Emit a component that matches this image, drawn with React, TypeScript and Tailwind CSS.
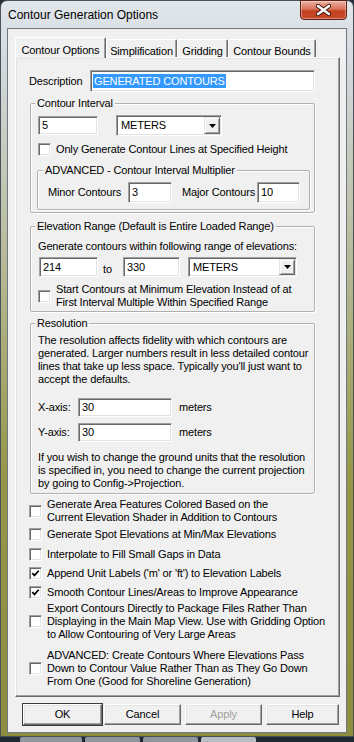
import React from 'react';

// classic (Win9x style) controls inside an Aero window frame
const SUNKEN =
  'border border-t-[#a0a0a0] border-l-[#a0a0a0] border-r-white border-b-white bg-white shadow-[inset_1px_1px_0_#696969,inset_-1px_-1px_0_#e3e3e3]';

function Edit({ value, className }: { value: string; className: string }) {
  return (
    <div className={`${SUNKEN} flex items-center pl-[3px] shrink-0 ${className}`}>
      <span className="whitespace-nowrap">{value}</span>
    </div>
  );
}

function Combo({ value, className }: { value: string; className: string }) {
  return (
    <div className={`${SUNKEN} flex items-stretch p-[1px] shrink-0 ${className}`}>
      <span className="flex-1 flex items-center pl-[3px] whitespace-nowrap">{value}</span>
      <span className="w-[16px] flex items-center justify-center bg-[#f0f0f0] border border-t-[#e3e3e3] border-l-[#e3e3e3] border-r-[#696969] border-b-[#696969] shadow-[inset_1px_1px_0_#fff,inset_-1px_-1px_0_#a0a0a0]">
        <svg width="7" height="4" viewBox="0 0 7 4">
          <path d="M0 0h7L3.5 4z" fill="#000" />
        </svg>
      </span>
    </div>
  );
}

function Check({ checked }: { checked?: boolean }) {
  return (
    <span className={`${SUNKEN} w-[13px] h-[13px] shrink-0 flex items-center justify-center`}>
      {checked && (
        <svg width="9" height="9" viewBox="0 0 9 9">
          <path d="M1.3 4.2l2.2 2.2 4.2-4.6" stroke="#000" strokeWidth="1.7" fill="none" />
        </svg>
      )}
    </span>
  );
}

function CheckRow({ checked, lines, className = '' }: { checked?: boolean; lines: string[]; className?: string }) {
  return (
    <div className={`flex items-center gap-[5px] ${className}`}>
      <Check checked={checked} />
      <div className="leading-[13px] whitespace-nowrap">
        {lines.map((l) => (
          <div key={l}>{l}</div>
        ))}
      </div>
    </div>
  );
}

function Btn({ label, className = '', disabled }: { label: string; className?: string; disabled?: boolean }) {
  return (
    <div
      className={`h-[21px] flex items-center justify-center bg-[#f0f0f0] border border-t-white border-l-white border-r-[#696969] border-b-[#696969] shadow-[inset_-1px_-1px_0_#a0a0a0,inset_1px_1px_0_#e3e3e3] ${
        disabled ? 'text-[#a0a0a0]' : 'text-black'
      } ${className}`}
    >
      {label}
    </div>
  );
}

const tabs = [
  { label: 'Simplification', w: 'w-[71px]' },
  { label: 'Gridding', w: 'w-[51px]' },
  { label: 'Contour Bounds', w: 'w-[88px]' },
];

export default function App() {
  return (
    <div className="w-[354px] h-[742px] overflow-hidden bg-[#25303b] font-['Liberation_Sans',Arial,sans-serif] text-[11px] tracking-[-0.15px] text-black">
      <div className="h-[737px] flex flex-col rounded-t-[7px] border border-[#4b5157] bg-[linear-gradient(180deg,#e1e6eb_0px,#d3d9de_60px,#bcc0a6_220px,#959646_480px,#8c8d3f_737px)]">
        {/* title bar */}
        <div className="h-[27px] shrink-0 flex items-start justify-between">
          <span className="pl-[7px] pt-[6px] text-[12px] tracking-normal leading-[16px] whitespace-nowrap">
            Contour Generation Options
          </span>
          <div className="relative w-[47px] h-[20px] -mt-[1px] mr-[6px] rounded-b-[4px] border border-[#5e2015] bg-[linear-gradient(180deg,#eab2a2_0%,#d8735b_45%,#c4401f_55%,#c84a2a_100%)] shadow-[inset_0_0_0_1px_rgba(255,255,255,0.35)]">
            <svg width="47" height="20" viewBox="0 0 47 20" className="absolute -left-[1px] -top-[1px]">
              <path d="M18 6l11 8M29 6l-11 8" stroke="#43170e" strokeWidth="4.4" strokeLinecap="round" />
              <path d="M18 6l11 8M29 6l-11 8" stroke="#fff" strokeWidth="2.4" strokeLinecap="round" />
            </svg>
          </div>
        </div>

        {/* client area */}
        <div className="mx-[6px] h-[705px] shrink-0 border border-[#6f7781] bg-[#f0f0f0] pt-[8px] pl-[7px]">
          {/* tab strip */}
          <div className="flex items-end h-[20px]">
            <div className="relative z-10 w-[91px] h-[21px] -mb-[1px] flex items-start justify-center pt-[4px] bg-[#f0f0f0] rounded-t-[2px] border border-b-0 border-t-white border-l-white border-r-[#696969] shadow-[inset_-1px_0_0_#a0a0a0]">
              Contour Options
            </div>
            {tabs.map((t) => (
              <div
                key={t.label}
                className={`${t.w} h-[18px] flex items-start justify-center pt-[3px] bg-[#f0f0f0] rounded-t-[2px] border border-b-0 border-t-white border-l-white border-r-[#696969] shadow-[inset_-1px_0_0_#a0a0a0] whitespace-nowrap`}
              >
                {t.label}
              </div>
            ))}
          </div>

          {/* tab page */}
          <div className="w-[325px] h-[640px] border border-t-white border-l-white border-r-[#696969] border-b-[#696969] shadow-[inset_-1px_-1px_0_#a0a0a0,inset_1px_1px_0_#e3e3e3] pl-[13px] flex flex-col">
            <div className="mt-[12px] flex items-center h-[22px]">
              <span className="w-[61px]">Description</span>
              <div className={`${SUNKEN} w-[225px] h-[22px] flex items-center pl-[2px]`}>
                <span className="bg-[#3399ff] text-white leading-[14px] px-[1px] whitespace-nowrap">GENERATED CONTOURS</span>
              </div>
            </div>

            {/* Contour Interval */}
            <fieldset className="ml-[1px] mt-[5px] w-[285px] border border-[#b0b0b0] rounded-[2px] shadow-[inset_1px_1px_0_#fff,1px_1px_0_#fff]">
              <legend className="ml-[4px] px-[2px] leading-[13px] bg-[#f0f0f0]">Contour Interval</legend>
              <div className="pl-[7px] pt-[5px] pb-[2px]">
                <div className="flex items-center h-[21px]">
                  <Edit value="5" className="w-[60px] h-[19px]" />
                  <Combo value="METERS" className="ml-[18px] w-[106px] h-[21px]" />
                </div>
                <CheckRow className="mt-[7px]" lines={['Only Generate Contour Lines at Specified Height']} />

                <fieldset className="-ml-[1px] mt-[8px] w-[273px] border border-[#b0b0b0] rounded-[2px] shadow-[inset_1px_1px_0_#fff,1px_1px_0_#fff]">
                  <legend className="ml-[5px] px-[2px] leading-[13px] bg-[#f0f0f0]">ADVANCED - Contour Interval Multiplier</legend>
                  <div className="pl-[10px] pt-[5px] pb-[6px] flex items-center h-[21px] box-content">
                    <span className="w-[80px] whitespace-nowrap">Minor Contours</span>
                    <Edit value="3" className="w-[44px] h-[21px]" />
                    <span className="ml-[10px] w-[75px] whitespace-nowrap">Major Contours</span>
                    <Edit value="10" className="w-[43px] h-[21px]" />
                  </div>
                </fieldset>
              </div>
            </fieldset>

            {/* Elevation Range */}
            <fieldset className="ml-[1px] mt-[7px] w-[285px] border border-[#b0b0b0] rounded-[2px] shadow-[inset_1px_1px_0_#fff,1px_1px_0_#fff]">
              <legend className="ml-[4px] px-[2px] leading-[13px] bg-[#f0f0f0]">Elevation Range (Default is Entire Loaded Range)</legend>
              <div className="pl-[7px] pt-[7px] pb-[2px]">
                <div className="leading-[13px] whitespace-nowrap">Generate contours within following range of elevations:</div>
                <div className="mt-[4px] flex items-center h-[20px]">
                  <Edit value="214" className="ml-[1px] w-[59px] h-[20px]" />
                  <span className="ml-[5px] w-[20px] pt-[4px]">to</span>
                  <Edit value="330" className="w-[57px] h-[20px]" />
                  <Combo value="METERS" className="ml-[8px] w-[109px] h-[20px]" />
                </div>
                <CheckRow
                  className="mt-[6px]"
                  lines={['Start Contours at Minimum Elevation Instead of at', 'First Interval Multiple Within Specified Range']}
                />
              </div>
            </fieldset>

            {/* Resolution */}
            <fieldset className="ml-[1px] mt-[5px] w-[285px] border border-[#b0b0b0] rounded-[2px] shadow-[inset_1px_1px_0_#fff,1px_1px_0_#fff]">
              <legend className="ml-[4px] px-[2px] leading-[13px] bg-[#f0f0f0]">Resolution</legend>
              <div className="pl-[7px] pt-[4px] pb-[3px]">
                <div className="leading-[13px] whitespace-nowrap">
                  <div>The resolution affects fidelity with which contours are</div>
                  <div>generated. Larger numbers result in less detailed contour</div>
                  <div>lines that take up less space. Typically you'll just want to</div>
                  <div>accept the defaults.</div>
                </div>
                <div className="mt-[12px] flex items-center h-[19px]">
                  <span className="w-[40px]">X-axis:</span>
                  <Edit value="30" className="w-[94px] h-[19px]" />
                  <span className="ml-[7px]">meters</span>
                </div>
                <div className="mt-[6px] flex items-center h-[19px]">
                  <span className="w-[40px]">Y-axis:</span>
                  <Edit value="30" className="w-[94px] h-[19px]" />
                  <span className="ml-[7px]">meters</span>
                </div>
                <div className="mt-[9px] leading-[13px] whitespace-nowrap">
                  <div>If you wish to change the ground units that the resolution</div>
                  <div>is specified in, you need to change the current projection</div>
                  <div>by going to Config-&gt;Projection.</div>
                </div>
              </div>
            </fieldset>

            <CheckRow
              className="mt-[4px]"
              lines={['Generate Area Features Colored Based on the', 'Current Elevation Shader in Addition to Contours']}
            />
            <CheckRow className="mt-[4px]" lines={['Generate Spot Elevations at Min/Max Elevations']} />
            <CheckRow className="mt-[7px]" lines={['Interpolate to Fill Small Gaps in Data']} />
            <CheckRow className="mt-[6px]" checked lines={["Append Unit Labels ('m' or 'ft') to Elevation Labels"]} />
            <CheckRow className="mt-[6px]" checked lines={['Smooth Contour Lines/Areas to Improve Appearance']} />
            <CheckRow
              className="mt-[3px]"
              lines={[
                'Export Contours Directly to Package Files Rather Than',
                'Displaying in the Main Map View. Use with Gridding Option',
                'to Allow Contouring of Very Large Areas',
              ]}
            />
            <CheckRow
              className="mt-[8px]"
              lines={[
                'ADVANCED: Create Contours Where Elevations Pass',
                'Down to Contour Value Rather Than as They Go Down',
                'From One (Good for Shoreline Generation)',
              ]}
            />
          </div>

          {/* buttons */}
          <div className="mt-[7px] flex">
            <Btn label="OK" className="ml-[8px] w-[79px] outline outline-1 outline-[#3c3c3c]" />
            <Btn label="Cancel" className="ml-[2px] w-[77px]" />
            <Btn label="Apply" disabled className="ml-[4px] w-[77px]" />
            <Btn label="Help" className="ml-[4px] w-[73px]" />
          </div>
        </div>
      </div>

      {/* taskbar peeking below the window */}
      <div className="h-[5px] flex gap-[3px] pl-[20px] bg-[#1e2833]">
        <div className="w-[62px] bg-[#8f969e] rounded-t-[2px]" />
        <div className="w-[55px] bg-[#8f969e] rounded-t-[2px]" />
        <div className="w-[55px] bg-[#8f969e] rounded-t-[2px]" />
        <div className="w-[55px] bg-[#b9bec4] rounded-t-[2px]" />
      </div>
    </div>
  );
}
